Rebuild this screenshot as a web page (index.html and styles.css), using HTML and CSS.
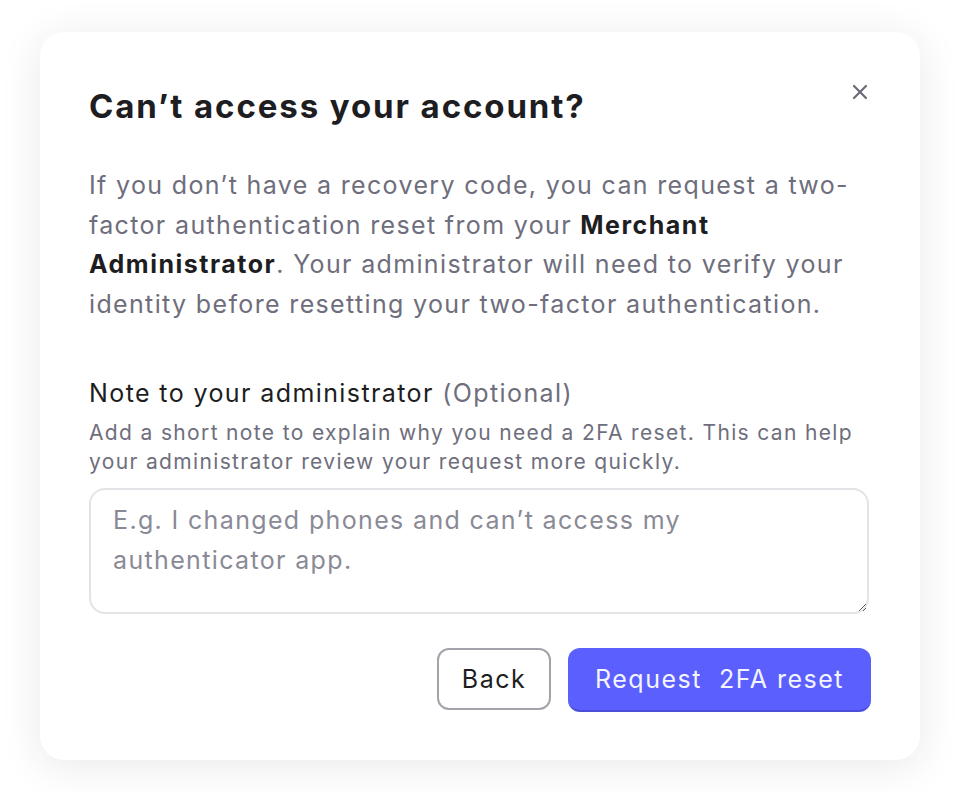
FILE: index.html
```html
<!DOCTYPE html>
<html lang="en">
<head>
<meta charset="utf-8">
<title>Can’t access your account?</title>
<link rel="stylesheet" href="styles.css">
</head>
<body>
<div class="stage">
  <div class="card">
    <div class="head">
      <h1 class="title">Can’t access your account?</h1>
      <button class="close" aria-label="Close">
        <svg width="16" height="16" viewBox="0 0 16 16"><path d="M2 2 L14 14 M14 2 L2 14" stroke="#6b6b78" stroke-width="2.2" stroke-linecap="round"/></svg>
      </button>
    </div>
    <p class="desc">If you don’t have a recovery code, you can request a two-factor authentication reset from your <strong>Merchant Administrator</strong>. Your administrator will need to verify your identity before resetting your two-factor authentication.</p>
    <div class="field">
      <label class="label">Note to your administrator <span class="opt">(Optional)</span></label>
      <p class="help">Add a short note to explain why you need a 2FA reset. This can help your administrator review your request more quickly.</p>
      <textarea class="note" placeholder="E.g. I changed phones and can’t access my authenticator app."></textarea>
    </div>
    <div class="actions">
      <button class="btn btn-back">Back</button>
      <button class="btn btn-primary">Request&nbsp; 2FA reset</button>
    </div>
  </div>
</div>
</body>
</html>
```
FILE: styles.css
```css
* { box-sizing: border-box; }
html, body { margin: 0; padding: 0; background: #ffffff; }
body { font-family: Inter, "Noto Sans", sans-serif; }
.stage { padding: 32px 40px; }
.card {
  width: 880px;
  height: 728px;
  background: #fff;
  border-radius: 24px;
  box-shadow: 0 6px 40px rgba(40, 40, 70, 0.10);
  padding: 54px 49px 0 49px;
}
.head { display: flex; justify-content: space-between; align-items: flex-start; }
.title {
  margin: 0;
  font-size: 33px;
  font-weight: 700;
  line-height: 40px;
  color: #1d1d22;
  letter-spacing: 1.9px;
}
.close {
  border: 0; background: none; padding: 0; margin: -2px 3px 0 0;
  width: 16px; height: 16px; cursor: pointer; flex: none;
}
.close svg { display: block; }
.desc {
  margin: 40px 0 0 0;
  font-size: 25px;
  line-height: 39.5px;
  letter-spacing: 1.35px;
  color: #6e6e7c;
}
.desc strong { color: #1d1d22; font-weight: 650; letter-spacing: 1.5px; }
.field { margin-top: 53px; }
.label {
  display: block;
  font-size: 25px;
  line-height: 32px;
  letter-spacing: 1.4px;
  color: #1d1d22;
}
.opt { color: #6e6e7c; }
.help {
  margin: 9px 0 0 0;
  font-size: 21px;
  line-height: 29px;
  letter-spacing: 1.35px;
  color: #6e6e7c;
}
.note {
  display: block;
  margin-top: 12px;
  width: 780px;
  height: 126px;
  border: 2px solid #e3e3e8;
  border-radius: 16px;
  padding: 10px 22px;
  font-family: Inter, "Noto Sans", sans-serif;
  font-size: 25px;
  line-height: 40px;
  letter-spacing: 1.35px;
  color: #1d1d22;
  resize: vertical;
  outline: none;
}
.note::placeholder { color: #8a8a96; }
.actions {
  display: flex;
  justify-content: flex-end;
  align-items: flex-start;
  gap: 17px;
  margin-top: 34px;
}
.btn {
  font-family: Inter, "Noto Sans", sans-serif;
  font-size: 25px;
  letter-spacing: 1.5px;
  height: 62px;
  border-radius: 12px;
  cursor: pointer;
  padding: 0;
}
.btn-back {
  width: 114px;
  background: #fff;
  border: 2px solid #a3a3ab;
  color: #1d1d22;
}
.btn-primary {
  width: 303px;
  height: 64px;
  background: #5b5ffd;
  border: 0;
  border-bottom: 2px solid #4a4ed8;
  color: #f4f4ff;
}
```
